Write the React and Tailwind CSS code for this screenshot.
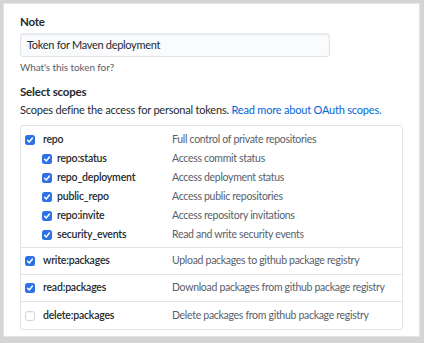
import React from 'react';

const subScopes = [
  { name: 'repo:status', desc: 'Access commit status' },
  { name: 'repo_deployment', desc: 'Access deployment status' },
  { name: 'public_repo', desc: 'Access public repositories' },
  { name: 'repo:invite', desc: 'Access repository invitations' },
  { name: 'security_events', desc: 'Read and write security events' },
];

const packageScopes = [
  { name: 'write:packages', desc: 'Upload packages to github package registry', checked: true },
  { name: 'read:packages', desc: 'Download packages from github package registry', checked: true },
  { name: 'delete:packages', desc: 'Delete packages from github package registry', checked: false },
];

const Box = ({ checked }) =>
  checked ? (
    <span className="flex h-[10px] w-[10px] shrink-0 items-center justify-center rounded-[2.5px] bg-[#2d72e4]">
      <svg width="8" height="8" viewBox="0 0 10 10" fill="none">
        <path d="M2 5.3 4.1 7.4 8 2.6" stroke="white" strokeWidth="1.9" strokeLinecap="round" strokeLinejoin="round" />
      </svg>
    </span>
  ) : (
    <span className="h-[10px] w-[10px] shrink-0 rounded-[2.5px] border border-[#d4d4d4] bg-white shadow-[inset_0_1px_1px_rgba(0,0,0,0.05)]" />
  );

const Row = ({ name, desc, checked, sub }) => (
  <div className="flex h-[19px] items-center">
    <div className={`flex w-[151px] shrink-0 items-center ${sub ? 'gap-[5px] pl-[21px]' : 'gap-[8px] pl-[4px]'}`}>
      <Box checked={checked} />
      <span className="text-[10.5px] font-semibold tracking-[-0.2px] text-[#24292e]">{name}</span>
    </div>
    <span className="whitespace-nowrap text-[10.5px] tracking-[-0.3px] text-[#586069]">{desc}</span>
  </div>
);

const App = () => {
  return (
    <div
      className="h-[343px] w-[424px] bg-[#d5d5d5] pb-[6px] pl-[3px] pr-[4px] pt-[3px]"
      style={{ fontFamily: 'Lato, "Liberation Sans", Arial, sans-serif' }}
    >
      <div className="h-full w-full border border-[#e4e4e4] bg-white pl-[16px] pt-[10px]">
        <div className="text-[11.5px] font-bold leading-[16px] tracking-[-0.2px] text-[#24292e]">Note</div>
        <div className="mt-[3px] flex h-[24px] w-[310px] items-center rounded-[3px] border border-[#e1e4e8] bg-[#fafbfc] px-[6px] text-[11px] tracking-[-0.3px] text-[#24292e] shadow-[inset_0_1px_2px_rgba(27,31,35,0.075)]">
          Token for Maven deployment
        </div>
        <div className="mt-[3px] text-[10px] leading-[14px] tracking-[-0.1px] text-[#586069]">What's this token for?</div>

        <div className="mt-[10px] text-[11.5px] font-bold leading-[16px] tracking-[-0.2px] text-[#24292e]">Select scopes</div>
        <div className="mt-[3px] whitespace-nowrap text-[11px] leading-[14px] tracking-[-0.2px] text-[#24292e]">
          Scopes define the access for personal tokens.{' '}
          <span className="text-[#0366d6]">Read more about OAuth scopes.</span>
        </div>

        <div className="mt-[8px] w-[383px] rounded-[3px] border border-[#e1e4e8]">
          <div className="border-b border-[#e1e4e8] pb-[3px] pt-[4px]">
            <Row name="repo" desc="Full control of private repositories" checked />
            {subScopes.map((s) => (
              <Row key={s.name} name={s.name} desc={s.desc} checked sub />
            ))}
          </div>
          {packageScopes.map((s, i) => (
            <div
              key={s.name}
              className={`flex h-[27px] items-center ${i < packageScopes.length - 1 ? 'border-b border-[#e1e4e8]' : ''}`}
            >
              <div className="w-full">
                <Row name={s.name} desc={s.desc} checked={s.checked} />
              </div>
            </div>
          ))}
        </div>
      </div>
    </div>
  );
};

export default App;
